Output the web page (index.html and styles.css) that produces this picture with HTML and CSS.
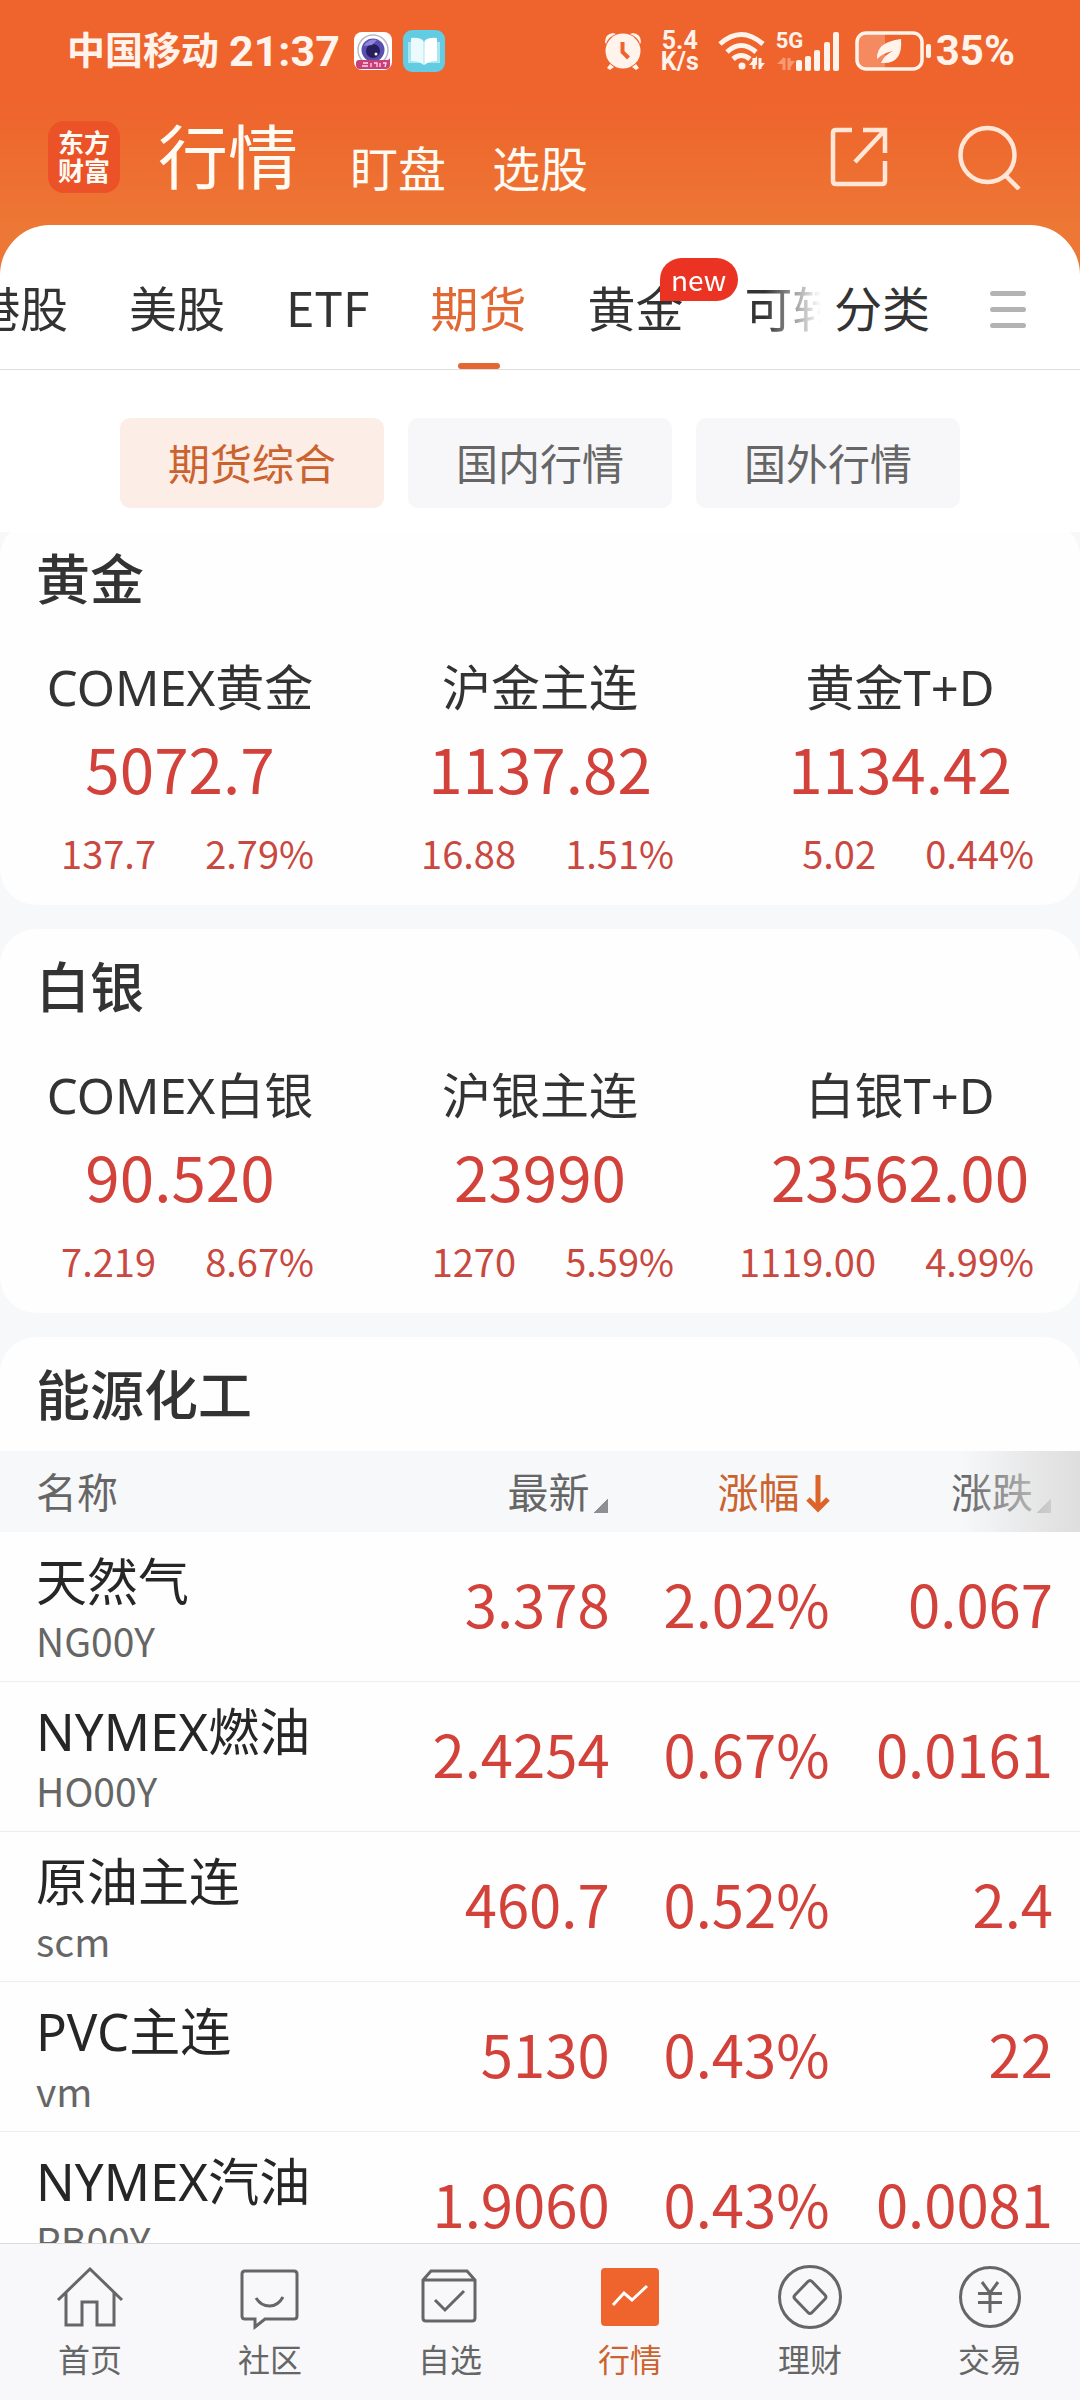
FILE: index.html
```html
<!DOCTYPE html>
<html lang="zh-CN">
<head>
<meta charset="utf-8">
<meta name="viewport" content="width=device-width, initial-scale=1">
<title>行情</title>
<link rel="stylesheet" href="styles.css">
</head>
<body>
<div class="app">
  <header class="top">
    <div class="status">
      <span class="carrier">中国移动</span>
      <span class="clock">21:37</span>
      <svg class="app-cam" width="38" height="38" viewBox="0 0 38 38" aria-hidden="true">
        <rect width="38" height="38" rx="8" fill="#fff"/>
        <circle cx="19" cy="18" r="15" fill="none" stroke="#b9b9c6" stroke-width="1.500"/>
        <circle cx="19" cy="18" r="11.500" fill="#5a4fb0"/>
        <circle cx="19" cy="19" r="7" fill="#261f5c"/>
        <path d="M10 14a11 11 0 0 1 13-6l-5 5z" fill="#9186dc"/>
        <circle cx="22" cy="22" r="1.500" fill="#fff"/>
        <path d="M2 31q0-3 3-3h28q3 0 3-3v8q0 4-4 4H6q-4 0-4-4z" fill="#c93f78"/>
        <path d="M9 31h5M8 34h6M17 31v4M20 31h3v4M26 31v4M29 31h3l-1 4" stroke="#ffd9e6" stroke-width="1.300" fill="none"/>
      </svg>
      <svg class="app-book" width="42" height="42" viewBox="0 0 42 42" aria-hidden="true">
        <rect width="42" height="42" rx="9" fill="#63cbe2"/>
        <path d="M5 12h32v21H24l-3 2-3-2H5z" fill="#a9e6f2"/>
        <path d="M8 8q9-1 12.500 3v24Q17 31 8 31z" fill="#eafafd"/>
        <path d="M34 8q-9-1-12.500 3v24Q25 31 34 31z" fill="#fff"/>
      </svg>
      <div class="status-right">
        <svg width="38" height="40" viewBox="0 0 38 40" aria-hidden="true" fill="#fff3ec">
          <circle cx="19" cy="20" r="17.500"/>
          <path d="M1 11q0-8 8-9l3 1Q4 6 2 13zM37 11q0-8-8-9l-3 1q8 3 10 10zM6 33l4 3-4 3-3-2zM32 33l-4 3 4 3 3-2z"/>
          <path d="M18.500 11v10l6 6" fill="none" stroke="#ee642c" stroke-width="4"/>
        </svg>
        <span class="speed"><span>5.4</span><span>K/s</span></span>
        <svg width="48" height="40" viewBox="0 0 48 40" aria-hidden="true" fill="none" stroke="#fff3ec" stroke-width="5">
          <path d="M2 13Q23-6 45 13M9 21q14-13 29 0M15 28q8-7 17 0"/>
          <circle cx="24" cy="35" r="3.500" fill="#fff3ec" stroke="none"/>
          <path d="M31 34h8v-9zM41 27v12l6-7h-6z" fill="#fff3ec" stroke="none"/>
          <path d="M36 27v11M42 27v11" stroke-width="3"/>
        </svg>
        <span class="signal">
          <span class="net">5G</span>
          <svg width="64" height="40" viewBox="0 0 64 40" aria-hidden="true" fill="#fff3ec">
            <path d="M1 33h7v-7zM13 38l6-8h-6z" fill="#f79a73"/>
            <path d="M8 27v12M13 27v12" stroke="#f79a73" stroke-width="3"/>
            <rect x="20" y="29" width="6" height="11" rx="2"/><rect x="29" y="25" width="6" height="15" rx="2"/>
            <rect x="38" y="19" width="6" height="21" rx="2"/><rect x="48" y="11" width="6" height="29" rx="2"/>
            <rect x="57" y="1" width="6" height="39" rx="2"/>
          </svg>
        </span>
        <svg width="76" height="40" viewBox="0 0 76 40" aria-hidden="true">
          <path d="M9 3h21v34H9q-6 0-6-6V9q0-6 6-6z" fill="#f58a61"/>
          <rect x="2" y="2" width="65" height="36" rx="9" fill="none" stroke="#fff3ec" stroke-width="3.500"/>
          <rect x="71" y="13" width="5" height="14" rx="2" fill="#fff3ec"/>
          <path d="M46 8q2 24-17 24l-3 0q3-8 12-12-10 2-16 8Q21 11 46 8z" fill="#fff3ec"/>
        </svg>
        <span class="battery">35%</span>
      </div>
    </div>
    <div class="titlebar">
      <div class="logo"><span>东方</span><span>财富</span></div>
      <nav class="modes">
        <a class="mode mode-on" href="#">行情</a>
        <a class="mode" href="#">盯盘</a>
        <a class="mode" href="#">选股</a>
      </nav>
      <div class="tools">
        <button class="icon-btn" aria-label="分享">
          <svg width="58" height="60" viewBox="0 0 58 60" fill="none" stroke="#ffe6d6" stroke-width="4.500">
            <path d="M22 3H6Q3 3 3 6v48q0 3 3 3h46q3 0 3-3V34M33 3h22v23M54 4L25 35"/>
          </svg>
        </button>
        <button class="icon-btn" aria-label="搜索">
          <svg width="64" height="66" viewBox="0 0 64 66" fill="none" stroke="#ffe6d6" stroke-width="4.500">
            <circle cx="29.500" cy="31" r="27"/><path d="M47 51l14 14"/>
          </svg>
        </button>
      </div>
    </div>
  </header>

  <div class="sheet">
    <nav class="tabs">
      <div class="tab-scroll">
        <a class="tab" href="#">港股</a>
        <a class="tab" href="#">美股</a>
        <a class="tab" href="#">ETF</a>
        <a class="tab tab-on" href="#">期货</a>
        <a class="tab" href="#">黄金<span class="badge">new</span></a>
        <a class="tab" href="#">可转债</a>
      </div>
      <a class="tab tab-sort" href="#">分类</a>
      <button class="menu" aria-label="菜单"><span></span><span></span><span></span></button>
    </nav>
    <div class="chips">
      <button class="chip chip-on">期货综合</button>
      <button class="chip">国内行情</button>
      <button class="chip">国外行情</button>
    </div>
  </div>

  <main class="content">
    <section class="card card-first">
      <h2>黄金</h2>
      <div class="quotes">
        <div class="quote"><span class="q-name">COMEX黄金</span><span class="q-price">5072.7</span><span class="q-diff">137.7</span><span class="q-diff">2.79%</span></div>
        <div class="quote"><span class="q-name">沪金主连</span><span class="q-price">1137.82</span><span class="q-diff">16.88</span><span class="q-diff">1.51%</span></div>
        <div class="quote"><span class="q-name">黄金T+D</span><span class="q-price">1134.42</span><span class="q-diff">5.02</span><span class="q-diff">0.44%</span></div>
      </div>
    </section>
    <section class="card">
      <h2>白银</h2>
      <div class="quotes">
        <div class="quote"><span class="q-name">COMEX白银</span><span class="q-price">90.520</span><span class="q-diff">7.219</span><span class="q-diff">8.67%</span></div>
        <div class="quote"><span class="q-name">沪银主连</span><span class="q-price">23990</span><span class="q-diff">1270</span><span class="q-diff">5.59%</span></div>
        <div class="quote"><span class="q-name">白银T+D</span><span class="q-price">23562.00</span><span class="q-diff">1119.00</span><span class="q-diff">4.99%</span></div>
      </div>
    </section>
    <section class="card card-table">
      <h2>能源化工</h2>
      <table>
        <colgroup><col class="c-name"><col class="c-last"><col class="c-pct"><col class="c-chg"></colgroup>
        <thead>
          <tr>
            <th>名称</th>
            <th>最新<i class="corner"></i></th>
            <th class="th-on">涨幅<svg class="arrow" width="24" height="40" viewBox="0 0 24 40" fill="none" stroke="#dc6428" stroke-width="5" aria-hidden="true"><path d="M12 1v34M2 25l10 10 10-10"/></svg></th>
            <th class="th-fade">涨跌<i class="corner"></i></th>
          </tr>
        </thead>
        <tbody>
          <tr><td><span class="name">天然气</span><span class="code">NG00Y</span></td><td>3.378</td><td>2.02%</td><td>0.067</td></tr>
          <tr><td><span class="name">NYMEX燃油</span><span class="code">HO00Y</span></td><td>2.4254</td><td>0.67%</td><td>0.0161</td></tr>
          <tr><td><span class="name">原油主连</span><span class="code">scm</span></td><td>460.7</td><td>0.52%</td><td>2.4</td></tr>
          <tr><td><span class="name">PVC主连</span><span class="code">vm</span></td><td>5130</td><td>0.43%</td><td>22</td></tr>
          <tr><td><span class="name">NYMEX汽油</span><span class="code">RB00Y</span></td><td>1.9060</td><td>0.43%</td><td>0.0081</td></tr>
        </tbody>
      </table>
    </section>
  </main>

  <nav class="dock">
    <a href="#"><svg viewBox="0 0 72 72"><path d="M4 38L36 7l32 31M12 31v32h16V40h15v23h17V31"/></svg>首页</a>
    <a href="#"><svg viewBox="0 0 72 72"><path d="M11 9h49q3 0 3 3v42q0 3-3 3H31l-10 8v-8H11q-3 0-3-3V12q0-3 3-3zM22 36q5 8 13.500 8T49 35"/></svg>社区</a>
    <a href="#"><svg viewBox="0 0 72 72"><path d="M17 9h36l8 9v38q0 3-3 3H12q-3 0-3-3V18zM9 18h52M21 38l10 10 19-19"/></svg>自选</a>
    <a class="dock-on" href="#"><svg viewBox="0 0 72 72"><rect x="7" y="6" width="58" height="58" rx="4" fill="#ee642c" stroke="none"/><path d="M19 43l11-12 8 7 15-14" stroke="#fff"/></svg>行情</a>
    <a href="#"><svg viewBox="0 0 72 72"><circle cx="36" cy="35" r="30.500"/><path d="M34 19.500q2-2 4 0l13 13.500q2 2 0 4L38 50.500q-2 2-4 0L21 37q-2-2 0-4z"/></svg>理财</a>
    <a href="#"><svg viewBox="0 0 72 72"><circle cx="36" cy="35" r="29.500"/><path d="M28 20l8 11 8-11M36 31v20M24 31.500h24M24 40.500h24"/></svg>交易</a>
  </nav>
</div>
</body>
</html>
```

FILE: styles.css
```css
* { box-sizing: border-box; }

body {
  margin: 0;
  font-family: "Noto Sans CJK SC", sans-serif;
  color: #333;
  background: #f7f8fa;
}

a { color: inherit; text-decoration: none; }
button { font: inherit; color: inherit; border: 0; padding: 0; background: none; }
svg { display: block; flex: none; }

.app {
  display: flex;
  flex-direction: column;
  height: 100vh;
  overflow: hidden;
}

/* Header */
.top {
  flex: none;
  padding-bottom: 75px;
  margin-bottom: -52px;
  background: linear-gradient(#ee642c 0, #ee642c 105px, #ed7735 225px);
}

.status {
  display: flex;
  align-items: center;
  height: 102px;
  padding: 0 65px 0 67px;
  color: #fff3ec;
  font-family: Roboto, "Noto Sans CJK SC", sans-serif;
  font-weight: 700;
  white-space: nowrap;
}
.carrier { font-size: 38px; line-height: 48px; }
.clock { margin-left: 10px; font-size: 43px; line-height: 48px; }
.app-cam { margin-left: 14px; }
.app-book { margin-left: 11px; }
.status-right { display: flex; align-items: center; margin-left: auto; }
.speed {
  display: flex;
  flex-direction: column;
  width: 40px;
  margin: 0 18px;
  font-size: 25px;
  line-height: 21px;
  text-align: center;
}
.signal { position: relative; margin: 0 15px 0 10px; }
.net {
  position: absolute;
  left: 0;
  top: 0;
  font-size: 22px;
  line-height: 20px;
}
.battery { margin-left: 5px; font-size: 42px; line-height: 48px; }

.titlebar {
  display: flex;
  align-items: center;
  height: 100px;
  padding: 0 58px 0 48px;
  color: #fffaf2;
}
.logo {
  display: flex;
  flex-direction: column;
  width: 72px;
  height: 72px;
  padding-top: 7px;
  margin-top: 10px;
  border-radius: 16px;
  background: #eb5228;
  font-size: 26px;
  line-height: 28px;
  font-weight: 700;
  text-align: center;
}
.modes { display: flex; align-items: flex-end; gap: 46px; margin-left: 38px; padding-top: 4px; }
.mode { font-size: 48px; line-height: 72px; }
.mode-on { margin-right: 6px; font-size: 70px; line-height: 96px; }
.tools { display: flex; align-items: center; gap: 70px; margin-left: auto; padding-top: 10px; }

/* Tabs and filters */
.sheet {
  flex: none;
  position: relative;
  z-index: 1;
  border-radius: 50px 50px 0 0;
  background: #fff;
}
.tabs {
  display: flex;
  align-items: flex-start;
  height: 145px;
  border-bottom: 1px solid #ddd;
}
.tab-scroll {
  flex: 1;
  display: flex;
  gap: 61px;
  min-width: 0;
  height: 144px;
  margin-left: -28px;
  overflow: hidden;
  -webkit-mask-image: linear-gradient(to left, transparent, #000 56px);
  mask-image: linear-gradient(to left, transparent, #000 56px);
}
.tab {
  position: relative;
  flex: none;
  font-size: 48px;
  line-height: 162px;
}
.tab-on { color: #e26733; }
.tab-on::after {
  content: "";
  position: absolute;
  left: 50%;
  top: 138px;
  width: 42px;
  height: 6px;
  margin-left: -21px;
  border-radius: 3px;
  background: #e26733;
}
.badge {
  position: absolute;
  left: 72px;
  top: 33px;
  width: 78px;
  height: 43px;
  border-radius: 22px 22px 22px 0;
  background: #ea3323;
  color: #fff;
  font-size: 28px;
  line-height: 42px;
  text-align: center;
}
.tab-sort { margin-left: 13px; }
.menu {
  display: flex;
  flex-direction: column;
  gap: 11px;
  width: 36px;
  margin: 66px 54px 0 60px;
}
.menu span { height: 5px; border-radius: 3px; background: #b3b3b3; }

.chips {
  display: flex;
  gap: 24px;
  padding: 48px 120px 24px;
}
.chip {
  flex: 1;
  height: 90px;
  padding-bottom: 2px;
  border-radius: 10px;
  background: #f7f7fa;
  color: #666;
  font-size: 42px;
  line-height: 88px;
}
.chip-on { background: #fcede6; color: #cb632f; }

/* Quote cards */
.content { flex: 1; min-height: 0; overflow: hidden; }
.card {
  margin-bottom: 24px;
  border-radius: 36px;
  background: #fefefe;
}
.card-first { margin-top: -11px; }
.card h2 {
  margin: 0;
  padding: 16px 36px 18px;
  font-size: 54px;
  line-height: 80px;
  font-weight: 500;
}
.quotes { display: grid; grid-template-columns: repeat(3, 1fr); }
.quote {
  display: grid;
  grid-template-columns: 1fr 1fr;
  padding: 15px 0 10px;
  text-align: center;
}
.q-name {
  grid-column: 1 / 3;
  font-family: "Noto Sans", "Noto Sans CJK SC", sans-serif;
  font-size: 49px;
  line-height: 74px;
}
.q-price {
  grid-column: 1 / 3;
  color: #d2413a;
  font-size: 62px;
  line-height: 86px;
}
.q-diff {
  color: #c9483f;
  font-size: 38px;
  line-height: 85px;
  text-align: right;
}
.q-diff:nth-child(3) { padding-right: 24px; }
.q-diff:nth-child(4) { padding-right: 46px; }

/* Market table */
.card-table { margin-bottom: 0; }
table { width: 100%; table-layout: fixed; border-collapse: separate; border-spacing: 0; }
.c-name { width: 32%; }
.c-last { width: 25%; }
.c-pct { width: 20%; }
.c-chg { width: 23%; }
th {
  height: 81px;
  padding: 0 0 4px;
  background: #f7f8fa;
  color: #666;
  font-size: 41px;
  line-height: 60px;
  font-weight: 400;
  text-align: right;
  white-space: nowrap;
}
.th-on { color: #cb632f; }
.th-fade { position: relative; }
.th-fade::after {
  content: "";
  position: absolute;
  top: 0;
  right: 0;
  bottom: 0;
  width: 120px;
  background: linear-gradient(to left, #dedede, rgba(222, 222, 222, .7) 40px, rgba(240, 240, 240, 0));
}
.corner {
  display: inline-block;
  width: 15px;
  height: 15px;
  margin: 0 2px 0 3px;
  vertical-align: -5px;
  background: linear-gradient(135deg, transparent 50%, #8e8e93 50%);
}
.arrow { display: inline-block; margin-left: 6px; vertical-align: -6px; }
td {
  height: 150px;
  padding: 0 0 8px;
  border-bottom: 1px solid #eee;
  color: #d2413a;
  font-size: 58px;
  line-height: 80px;
  text-align: right;
  white-space: nowrap;
}
th:first-child, td:first-child { padding-left: 36px; text-align: left; }
td:first-child { padding-bottom: 0; }
th:nth-child(2), td:nth-child(2) { padding-right: 6px; }
th:nth-child(3), td:nth-child(3) { padding-right: 2px; }
th:last-child, td:last-child { padding-right: 27px; }
.name {
  display: block;
  color: #262626;
  font-family: "Noto Sans", "Noto Sans CJK SC", sans-serif;
  font-size: 51px;
  line-height: 66px;
}
.code { display: block; color: #666; font-size: 39px; line-height: 52px; }

/* Bottom navigation */
.dock {
  flex: none;
  display: grid;
  grid-template-columns: repeat(6, 1fr);
  height: 157px;
  padding-top: 18px;
  border-top: 1px solid #ddd;
  background: #f8f8fa;
}
.dock a {
  display: flex;
  flex-direction: column;
  align-items: center;
  color: #666;
  font-size: 32px;
  line-height: 48px;
}
.dock svg { width: 72px; height: 72px; fill: none; stroke: #666; stroke-width: 3; }
.dock .dock-on { color: #cb632f; }
```
